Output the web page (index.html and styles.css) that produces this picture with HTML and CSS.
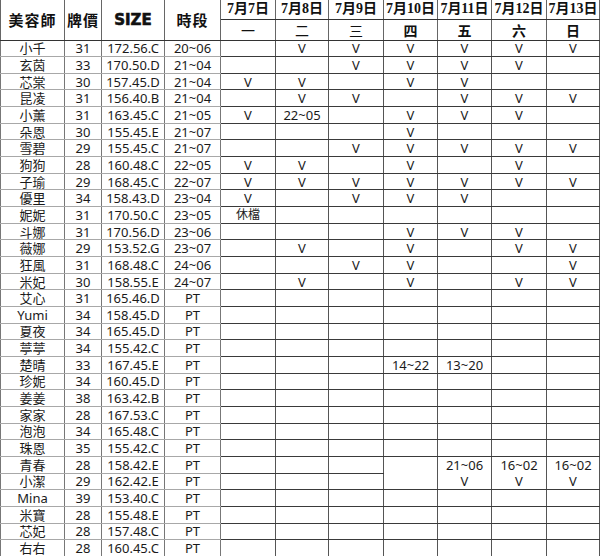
FILE: index.html
```html
<!DOCTYPE html>
<html lang="zh-Hant">
<head>
<meta charset="utf-8">
<title>班表</title>
<link rel="stylesheet" href="styles.css">
</head>
<body>
<table class="sched">
  <colgroup>
    <col class="c-name"><col class="c-price"><col class="c-size"><col class="c-time">
    <col class="c-d1"><col class="c-d2"><col class="c-d3"><col class="c-d4"><col class="c-d5"><col class="c-d6"><col class="c-d7">
  </colgroup>
  <thead>
    <tr class="h1">
      <th rowspan="2" class="hl">美容師</th>
      <th rowspan="2" class="hl">牌價</th>
      <th rowspan="2" class="hl size">SIZE</th>
      <th rowspan="2" class="hl">時段</th>
      <th class="date">7月7日</th>
      <th class="date">7月8日</th>
      <th class="date">7月9日</th>
      <th class="date">7月10日</th>
      <th class="date">7月11日</th>
      <th class="date red">7月12日</th>
      <th class="date red">7月13日</th>
    </tr>
    <tr class="h2">
      <th class="wd light">一</th>
      <th class="wd light">二</th>
      <th class="wd light">三</th>
      <th class="wd">四</th>
      <th class="wd">五</th>
      <th class="wd red">六</th>
      <th class="wd red">日</th>
    </tr>
  </thead>
  <tbody>
    <tr><td>小千</td><td>31</td><td>172.56.C</td><td>20~06</td><td class="d"></td><td class="d">V</td><td class="d">V</td><td class="d">V</td><td class="d">V</td><td class="d">V</td><td class="d">V</td></tr>
    <tr><td>玄茵</td><td>33</td><td>170.50.D</td><td>21~04</td><td class="d"></td><td class="d"></td><td class="d">V</td><td class="d">V</td><td class="d">V</td><td class="d">V</td><td class="d"></td></tr>
    <tr><td>芯棠</td><td>30</td><td>157.45.D</td><td>21~04</td><td class="d">V</td><td class="d">V</td><td class="d"></td><td class="d">V</td><td class="d">V</td><td class="d"></td><td class="d"></td></tr>
    <tr><td>昆凌</td><td>31</td><td>156.40.B</td><td>21~04</td><td class="d"></td><td class="d">V</td><td class="d">V</td><td class="d"></td><td class="d">V</td><td class="d">V</td><td class="d">V</td></tr>
    <tr><td>小薰</td><td>31</td><td>163.45.C</td><td>21~05</td><td class="d">V</td><td class="d">22~05</td><td class="d"></td><td class="d">V</td><td class="d">V</td><td class="d">V</td><td class="d"></td></tr>
    <tr><td>朵恩</td><td>30</td><td>155.45.E</td><td>21~07</td><td class="d"></td><td class="d"></td><td class="d"></td><td class="d">V</td><td class="d"></td><td class="d"></td><td class="d"></td></tr>
    <tr><td>雪碧</td><td>29</td><td>155.45.C</td><td>21~07</td><td class="d"></td><td class="d"></td><td class="d">V</td><td class="d">V</td><td class="d">V</td><td class="d">V</td><td class="d">V</td></tr>
    <tr><td>狗狗</td><td>28</td><td>160.48.C</td><td>22~05</td><td class="d">V</td><td class="d">V</td><td class="d"></td><td class="d">V</td><td class="d"></td><td class="d">V</td><td class="d"></td></tr>
    <tr><td>子瑜</td><td>29</td><td>168.45.C</td><td>22~07</td><td class="d">V</td><td class="d">V</td><td class="d">V</td><td class="d">V</td><td class="d">V</td><td class="d">V</td><td class="d">V</td></tr>
    <tr><td>優里</td><td>34</td><td>158.43.D</td><td>23~04</td><td class="d">V</td><td class="d"></td><td class="d">V</td><td class="d">V</td><td class="d">V</td><td class="d"></td><td class="d"></td></tr>
    <tr><td>妮妮</td><td>31</td><td>170.50.C</td><td>23~05</td><td class="d note">休檔</td><td class="d"></td><td class="d"></td><td class="d"></td><td class="d"></td><td class="d"></td><td class="d"></td></tr>
    <tr><td>斗娜</td><td>31</td><td>170.56.D</td><td>23~06</td><td class="d"></td><td class="d"></td><td class="d"></td><td class="d">V</td><td class="d">V</td><td class="d">V</td><td class="d"></td></tr>
    <tr><td>薇娜</td><td>29</td><td>153.52.G</td><td>23~07</td><td class="d"></td><td class="d">V</td><td class="d"></td><td class="d">V</td><td class="d"></td><td class="d">V</td><td class="d">V</td></tr>
    <tr><td>狂風</td><td>31</td><td>168.48.C</td><td>24~06</td><td class="d"></td><td class="d"></td><td class="d">V</td><td class="d">V</td><td class="d"></td><td class="d"></td><td class="d">V</td></tr>
    <tr><td>米妃</td><td>30</td><td>158.55.E</td><td>24~07</td><td class="d"></td><td class="d">V</td><td class="d"></td><td class="d">V</td><td class="d"></td><td class="d">V</td><td class="d">V</td></tr>
    <tr><td>艾心</td><td>31</td><td>165.46.D</td><td>PT</td><td class="d"></td><td class="d"></td><td class="d"></td><td class="d"></td><td class="d"></td><td class="d"></td><td class="d"></td></tr>
    <tr><td>Yumi</td><td>34</td><td>158.45.D</td><td>PT</td><td class="d"></td><td class="d"></td><td class="d"></td><td class="d"></td><td class="d"></td><td class="d"></td><td class="d"></td></tr>
    <tr><td>夏夜</td><td>34</td><td>165.45.D</td><td>PT</td><td class="d"></td><td class="d"></td><td class="d"></td><td class="d"></td><td class="d"></td><td class="d"></td><td class="d"></td></tr>
    <tr><td>葶葶</td><td>34</td><td>155.42.C</td><td>PT</td><td class="d"></td><td class="d"></td><td class="d"></td><td class="d"></td><td class="d"></td><td class="d"></td><td class="d"></td></tr>
    <tr><td>楚晴</td><td>33</td><td>167.45.E</td><td>PT</td><td class="d"></td><td class="d"></td><td class="d"></td><td class="d">14~22</td><td class="d">13~20</td><td class="d"></td><td class="d"></td></tr>
    <tr><td>珍妮</td><td>34</td><td>160.45.D</td><td>PT</td><td class="d"></td><td class="d"></td><td class="d"></td><td class="d"></td><td class="d"></td><td class="d"></td><td class="d"></td></tr>
    <tr><td>姜姜</td><td>38</td><td>163.42.B</td><td>PT</td><td class="d"></td><td class="d"></td><td class="d"></td><td class="d"></td><td class="d"></td><td class="d"></td><td class="d"></td></tr>
    <tr><td>家家</td><td>28</td><td>167.53.C</td><td>PT</td><td class="d"></td><td class="d"></td><td class="d"></td><td class="d"></td><td class="d"></td><td class="d"></td><td class="d"></td></tr>
    <tr><td>泡泡</td><td>34</td><td>165.48.C</td><td>PT</td><td class="d"></td><td class="d"></td><td class="d"></td><td class="d"></td><td class="d"></td><td class="d"></td><td class="d"></td></tr>
    <tr><td>珠恩</td><td>35</td><td>155.42.C</td><td>PT</td><td class="d"></td><td class="d"></td><td class="d"></td><td class="d"></td><td class="d"></td><td class="d"></td><td class="d"></td></tr>
    <tr><td>青春</td><td>28</td><td>158.42.E</td><td>PT</td><td class="d"></td><td class="d"></td><td class="d"></td><td class="d open"></td><td class="d open">21~06</td><td class="d open">16~02</td><td class="d open">16~02</td></tr>
    <tr><td>小潔</td><td>29</td><td>162.42.E</td><td>PT</td><td class="d"></td><td class="d"></td><td class="d"></td><td class="d"></td><td class="d">V</td><td class="d">V</td><td class="d">V</td></tr>
    <tr><td>Mina</td><td>39</td><td>153.40.C</td><td>PT</td><td class="d"></td><td class="d"></td><td class="d"></td><td class="d"></td><td class="d"></td><td class="d"></td><td class="d"></td></tr>
    <tr><td>米寶</td><td>28</td><td>155.48.E</td><td>PT</td><td class="d"></td><td class="d"></td><td class="d"></td><td class="d"></td><td class="d"></td><td class="d"></td><td class="d"></td></tr>
    <tr><td>芯妃</td><td>28</td><td>157.48.C</td><td>PT</td><td class="d"></td><td class="d"></td><td class="d"></td><td class="d"></td><td class="d"></td><td class="d"></td><td class="d"></td></tr>
    <tr><td>右右</td><td>28</td><td>160.45.C</td><td>PT</td><td class="d"></td><td class="d"></td><td class="d"></td><td class="d"></td><td class="d"></td><td class="d"></td><td class="d"></td></tr>
  </tbody>
</table>
</body>
</html>
```
FILE: styles.css
```css
html, body {
  margin: 0;
  padding: 0;
  background: #fff;
}

.sched {
  border-collapse: collapse;
  table-layout: fixed;
  width: 599px;
  font-family: "Noto Sans", "Noto Sans CJK TC", sans-serif;
  font-size: 13px;
  color: #1a1a1a;
}

.c-name { width: 64px; }
.c-price { width: 37px; }
.c-size { width: 63px; }
.c-time { width: 56px; }
.c-d1 { width: 55px; }
.c-d2 { width: 53px; }
.c-d3 { width: 55px; }
.c-d4 { width: 54px; }
.c-d5 { width: 54px; }
.c-d6 { width: 55px; }
.c-d7 { width: 53px; }

.sched th,
.sched td {
  padding: 0;
  text-align: center;
  vertical-align: middle;
  white-space: nowrap;
  overflow: hidden;
}

.sched td {
  height: 15.667px;
  line-height: 14px;
  border-left: 1px solid #777;
  border-right: 1px solid #777;
  border-bottom: 1px solid #a8a8a8;
}

.sched td.d {
  border-left: 1px solid #555;
  border-right: 1px solid #555;
  border-bottom: 1px solid #3a3a3a;
}

.sched td.note {
  font-size: 12px;
}

.sched td.open {
  border-bottom-style: hidden;
}

.sched tbody tr:last-child td {
  border-bottom: none;
}

.sched th {
  border-left: 1px solid #666;
  border-right: 1px solid #666;
  border-bottom: 1px solid #333;
  color: #111;
}

.h1 { height: 19px; }
.h2 { height: 21px; }

.hl {
  font-family: "Noto Sans CJK TC", serif;
  font-weight: 700;
  font-size: 15px;
  line-height: 16px;
  letter-spacing: 1px;
}

.hl.size {
  font-family: "DejaVu Sans", sans-serif;
  font-weight: 900;
  font-size: 15px;
  letter-spacing: 0;
  -webkit-text-stroke: 0.6px #111;
}

.date {
  font-family: "Liberation Serif", "Noto Sans CJK TC", serif;
  font-weight: 700;
  font-size: 14px;
  line-height: 14px;
}

.wd {
  font-family: "Noto Sans CJK TC", serif;
  font-weight: 700;
  font-size: 14px;
  line-height: 16px;
}

.wd.light {
  font-weight: 400;
}

.red {
  color: #b3151b;
}
```
